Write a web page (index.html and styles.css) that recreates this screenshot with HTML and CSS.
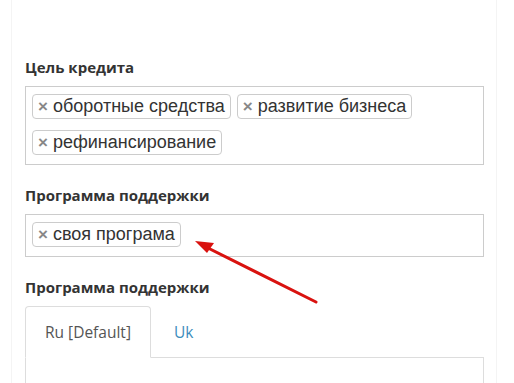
FILE: index.html
```html
<!DOCTYPE html>
<html lang="ru">
<head>
    <meta charset="UTF-8">
    <title>Кредит</title>
    <link rel="stylesheet" href="styles.css">
</head>
<body>
    <div class="panel">
        <div class="field">
            <label class="field-label">Цель кредита</label>
            <div class="tag-box">
                <span class="tag"><span class="tag-x">×</span>оборотные средства</span>
                <span class="tag"><span class="tag-x">×</span>развитие бизнеса</span>
                <span class="tag"><span class="tag-x">×</span>рефинансирование</span>
            </div>
        </div>

        <div class="field">
            <label class="field-label">Программа поддержки</label>
            <div class="tag-box">
                <span class="tag"><span class="tag-x">×</span>своя програма</span>
            </div>
        </div>

        <div class="field">
            <label class="field-label">Программа поддержки</label>
            <ul class="tabs">
                <li class="tab active">Ru [Default]</li>
                <li class="tab">Uk</li>
            </ul>
            <div class="tab-content"></div>
        </div>
    </div>

    <!-- annotation arrow -->
    <svg class="arrow" width="514" height="383" viewBox="0 0 514 383">
        <line x1="316" y1="302" x2="204" y2="246" stroke="#d9120f" stroke-width="3" stroke-linecap="round"/>
        <polygon points="195,241 214,243 207,253" fill="#d9120f"/>
    </svg>
</body>
</html>
```

FILE: styles.css
```css
body { margin: 0; background: #fff; font-family: "Liberation Sans", Arial, sans-serif; }
.panel {
    margin: 0 17px 0 11px;
    border-left: 1px solid #f4f4f4;
    border-right: 1px solid #f4f4f4;
    padding: 57px 12px 0 13px;
    height: 383px;
    box-sizing: border-box;
}
.field { margin-bottom: 20px; }
.field-label {
    display: block;
    font-family: "Open Sans", sans-serif;
    font-weight: bold;
    font-size: 15px;
    line-height: 20px;
    color: #333;
    margin-bottom: 9px;
}
.tag-box {
    border: 1px solid #ccc;
    padding: 7px 6px 9px 6px;
    display: flex;
    flex-wrap: wrap;
    gap: 11px 6px;
}
.tag {
    border: 1px solid #ccc;
    border-radius: 4px;
    padding: 0 5px 0 5px;
    font-size: 18px;
    color: #333;
    line-height: 22px;
}
.tag-x { color: #888; font-weight: bold; margin-right: 5px; font-size: 17px; }
.tabs { list-style: none; margin: 0; padding: 0; display: flex; border-bottom: 1px solid #ddd; }
.tab {
    font-family: "Open Sans", sans-serif;
    font-size: 15.5px;
    line-height: 20px;
    padding: 15px 19px 15px 19px;
    margin-right: 3px;
    color: #3c8dbc;
    border: 1px solid transparent;
    border-radius: 4px 4px 0 0;
    margin-bottom: -1px;
}
.tab.active { color: #555; border-color: #ddd; border-bottom-color: #fff; }
.tab-content { border: 1px solid #ddd; border-top: none; height: 40px; }
.arrow { position: absolute; left: 0; top: 0; pointer-events: none; }
```
